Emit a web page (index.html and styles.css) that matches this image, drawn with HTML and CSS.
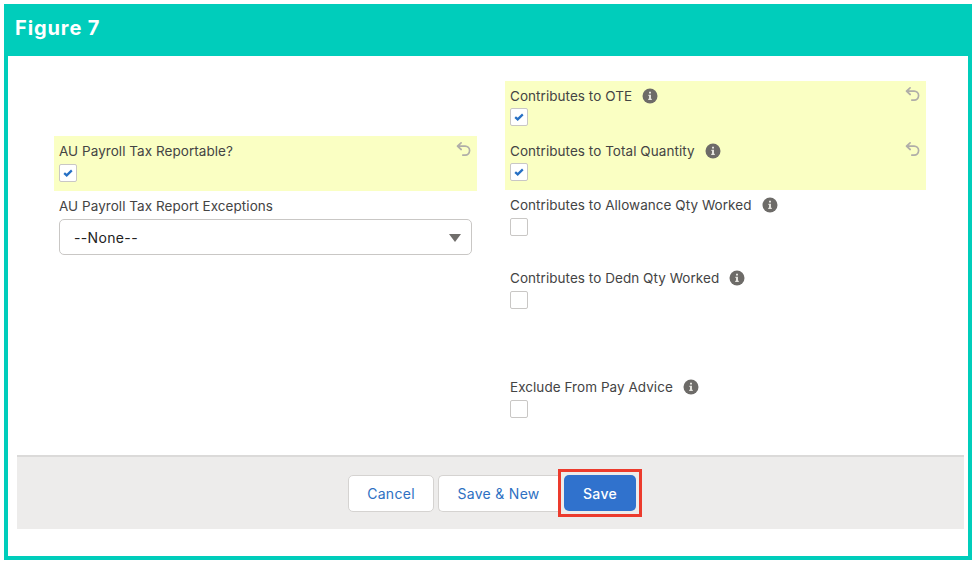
FILE: index.html
```html
<!DOCTYPE html>
<html lang="en">
<head>
<meta charset="utf-8">
<title>Figure 7</title>
<link rel="stylesheet" href="styles.css">
</head>
<body>
<svg class="defs" width="0" height="0">
  <symbol id="info" viewBox="0 0 16 16"><circle cx="8" cy="8" r="7.5" fill="#6d6b68"/><path d="M7 3.8h2v1.7H7zM6.4 6.7H9v4.1h.8v1.2H6.2v-1.2H7V8h-.6z" fill="#e4e3de"/></symbol>
  <symbol id="undo" viewBox="0 0 16 16"><path d="M5.1 1.8 1.5 5.1l3.7 3.4M1.7 5.1h7.4a4.5 4.5 0 0 1 0 9H6.8" fill="none" stroke="#b0aea8" stroke-width="1.7" stroke-linecap="round" stroke-linejoin="round"/></symbol>
  <symbol id="check" viewBox="0 0 10 8"><path d="M1.2 4.1 3.7 6.4 8.8 1.4" fill="none" stroke="#2670c4" stroke-width="2.2"/></symbol>
</svg>
<figure class="figure">
  <figcaption class="title">Figure 7</figcaption>
  <div class="form">
    <section class="column left">
      <div class="field edited">
        <div class="label"><span>AU Payroll Tax Reportable?</span><svg class="undo"><use href="#undo"/></svg></div>
        <div class="checkbox"><svg><use href="#check"/></svg></div>
      </div>
      <div class="field">
        <div class="label"><span>AU Payroll Tax Report Exceptions</span></div>
        <div class="select"><span>--None--</span><i class="arrow"></i></div>
      </div>
    </section>
    <section class="column right">
      <div class="field edited">
        <div class="label"><span>Contributes to OTE</span><svg class="info"><use href="#info"/></svg><svg class="undo"><use href="#undo"/></svg></div>
        <div class="checkbox"><svg><use href="#check"/></svg></div>
      </div>
      <div class="field edited">
        <div class="label"><span>Contributes to Total Quantity</span><svg class="info"><use href="#info"/></svg><svg class="undo"><use href="#undo"/></svg></div>
        <div class="checkbox"><svg><use href="#check"/></svg></div>
      </div>
      <div class="field medium">
        <div class="label"><span>Contributes to Allowance Qty Worked</span><svg class="info"><use href="#info"/></svg></div>
        <div class="checkbox"></div>
      </div>
      <div class="field tall">
        <div class="label"><span>Contributes to Dedn Qty Worked</span><svg class="info"><use href="#info"/></svg></div>
        <div class="checkbox"></div>
      </div>
      <div class="field">
        <div class="label"><span>Exclude From Pay Advice</span><svg class="info"><use href="#info"/></svg></div>
        <div class="checkbox"></div>
      </div>
    </section>
  </div>
  <footer class="actions">
    <button class="button cancel">Cancel</button>
    <button class="button save-new">Save &amp; New</button>
    <div class="callout"><button class="button primary">Save</button></div>
  </footer>
</figure>
</body>
</html>
```
FILE: styles.css
```css
* { box-sizing: border-box; }
body { margin: 0; padding: 4px; background: #fff; font-family: Inter, "Liberation Sans", sans-serif; }
.defs { display: block; position: absolute; }
.figure { margin: 0; width: 968px; height: 556px; border: 4px solid #00cdbb; background: #fff; }
.title { height: 48px; background: #00cdbb; color: #fff; font-size: 20px; font-weight: 700; line-height: 40px; padding-left: 7px; letter-spacing: .9px; }
.form { display: grid; grid-template-columns: 423px 421px; column-gap: 28px; padding: 25px 0 0 46px; height: 399px; }
.left { padding-top: 55px; }
.field { height: 55px; padding: 5px 5px 0; }
.edited { background: #faffc3; }
.right .edited + .edited { height: 54px; }
.medium { height: 73px; }
.tall { height: 109px; }
.label { display: flex; align-items: center; height: 19px; color: #444; font-size: 13.5px; letter-spacing: .05px; white-space: nowrap; }
.info { width: 16px; height: 16px; margin-left: 10px; }
.undo { width: 16px; height: 16px; margin: -3px 0 0 auto; }
.checkbox { display: flex; align-items: center; justify-content: center; width: 18px; height: 18px; margin-top: 4px; border: 1px solid #c9c7c5; border-radius: 2px; background: #fff; }
.right .edited .checkbox { margin-top: 3px; }
.checkbox svg { width: 10px; height: 8px; }
.select { display: flex; align-items: center; justify-content: space-between; height: 36px; margin-top: 4px; padding: 0 10px 0 14px; border: 1px solid #c9c7c5; border-radius: 5px; color: #222; font-size: 14px; letter-spacing: .35px; }
.arrow { margin-top: 1px; border: 6px solid transparent; border-top: 8px solid #706e6b; border-bottom: 0; }
.actions { display: flex; align-items: flex-start; height: 74px; margin: 0 4px 0 9px; padding: 12px 0 0 331px; border-top: 2px solid #dbdad9; background: #edeceb; }
.button { height: 37px; margin-top: 6px; padding: 0; border: 1px solid #d5d3d1; border-radius: 5px; background: #fff; color: #2e70c2; font: 14px Inter, sans-serif; letter-spacing: .3px; }
.cancel { width: 86px; }
.save-new { width: 120px; margin-left: 4px; border-right: 0; border-radius: 5px 0 0 5px; }
.callout { width: 84px; height: 48px; padding: 3px; border: 3px solid #ec3b2d; }
.primary { display: block; width: 72px; height: 36px; margin: 0; border: 0; background: #3072cd; color: #fff; font-weight: 500; }
```
